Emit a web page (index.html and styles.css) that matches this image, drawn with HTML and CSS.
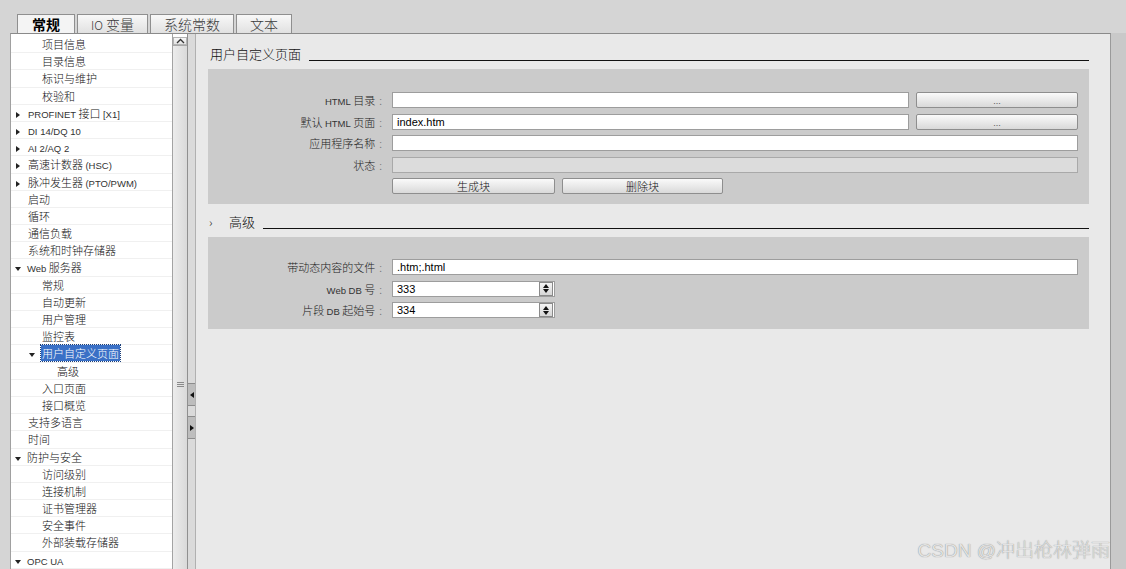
FILE: index.html
```html
<!DOCTYPE html>
<html lang="zh-CN">
<head>
    <meta charset="UTF-8">
    <title>Web 服务器 - 用户自定义页面</title>
    <link rel="stylesheet" href="styles.css">
</head>
<body>
    <!-- Tabs -->
    <div class="tabbar">
        <div class="tab active">常规</div>
        <div class="tab"><span class="tab-lat">IO</span> 变量</div>
        <div class="tab">系统常数</div>
        <div class="tab">文本</div>
    </div>

    <div class="workarea">
        <div class="frame">
            <!-- Navigation tree -->
            <ul class="tree">
                <li class="l1">项目信息</li>
                <li class="l1">目录信息</li>
                <li class="l1">标识与维护</li>
                <li class="l1">校验和</li>
                <li class="l0"><span class="tog closed"></span><span class="lat">PROFINET</span> 接口 <span class="lat">[X1]</span></li>
                <li class="l0"><span class="tog closed"></span><span class="lat">DI 14/DQ 10</span></li>
                <li class="l0"><span class="tog closed"></span><span class="lat">AI 2/AQ 2</span></li>
                <li class="l0"><span class="tog closed"></span>高速计数器 <span class="lat">(HSC)</span></li>
                <li class="l0"><span class="tog closed"></span>脉冲发生器 <span class="lat">(PTO/PWM)</span></li>
                <li class="l0">启动</li>
                <li class="l0">循环</li>
                <li class="l0">通信负载</li>
                <li class="l0">系统和时钟存储器</li>
                <li class="l0"><span class="tog open"></span><span class="lat">Web</span> 服务器</li>
                <li class="l1">常规</li>
                <li class="l1">自动更新</li>
                <li class="l1">用户管理</li>
                <li class="l1">监控表</li>
                <li class="l1"><span class="tog open"></span><span class="sel">用户自定义页面</span></li>
                <li class="l2">高级</li>
                <li class="l1">入口页面</li>
                <li class="l1">接口概览</li>
                <li class="l0">支持多语言</li>
                <li class="l0">时间</li>
                <li class="l0"><span class="tog open"></span>防护与安全</li>
                <li class="l1">访问级别</li>
                <li class="l1">连接机制</li>
                <li class="l1">证书管理器</li>
                <li class="l1">安全事件</li>
                <li class="l1">外部装载存储器</li>
                <li class="l0"><span class="tog open"></span><span class="lat">OPC UA</span></li>
            </ul>

            <!-- Tree scrollbar -->
            <div class="vscroll">
                <div class="sb-up">
                    <svg width="9" height="6" viewBox="0 0 9 6"><polyline points="1,5 4.5,1.5 8,5" fill="none" stroke="#333" stroke-width="1.3"/></svg>
                </div>
                <div class="sb-track"></div>
                <div class="sb-thumb">
                    <svg class="grip" width="7" height="6" viewBox="0 0 7 6"><path d="M0 0.5h7M0 2.5h7M0 4.5h7" stroke="#8a8a8a" stroke-width="1"/></svg>
                </div>
            </div>

            <!-- Splitter -->
            <div class="splitter">
                <span class="sp-btn"><span class="arr-left"></span></span>
                <span class="sp-btn"><span class="arr-right"></span></span>
            </div>

            <!-- Settings -->
            <div class="main">
                <div class="sec-head">
                    <span class="sec-title">用户自定义页面</span>
                    <span class="rule"></span>
                </div>
                <div class="panel panel-pages">
                    <div class="row">
                        <label class="lbl"><span class="lat">HTML</span> 目录<span class="colon">:</span></label>
                        <input class="field w-mid" type="text" value="">
                        <button class="btn browse">...</button>
                    </div>
                    <div class="row">
                        <label class="lbl">默认 <span class="lat">HTML</span> 页面<span class="colon">:</span></label>
                        <input class="field w-mid" type="text" value="index.htm">
                        <button class="btn browse">...</button>
                    </div>
                    <div class="row">
                        <label class="lbl">应用程序名称<span class="colon">:</span></label>
                        <input class="field w-full" type="text" value="">
                    </div>
                    <div class="row">
                        <label class="lbl">状态<span class="colon">:</span></label>
                        <input class="field w-full" type="text" value="" disabled>
                    </div>
                    <div class="row actions">
                        <button class="btn act">生成块</button>
                        <button class="btn act">删除块</button>
                    </div>
                </div>

                <div class="sec-head adv">
                    <span class="chev">›</span>
                    <span class="sec-title">高级</span>
                    <span class="rule"></span>
                </div>
                <div class="panel panel-adv">
                    <div class="row">
                        <label class="lbl">带动态内容的文件<span class="colon">:</span></label>
                        <input class="field w-full" type="text" value=".htm;.html">
                    </div>
                    <div class="row">
                        <label class="lbl"><span class="lat">Web DB</span> 号<span class="colon">:</span></label>
                        <div class="spin">
                            <input type="text" value="333">
                            <span class="spin-btn"><span class="up"></span><span class="down"></span></span>
                        </div>
                    </div>
                    <div class="row">
                        <label class="lbl">片段 <span class="lat">DB</span> 起始号<span class="colon">:</span></label>
                        <div class="spin">
                            <input type="text" value="334">
                            <span class="spin-btn"><span class="up"></span><span class="down"></span></span>
                        </div>
                    </div>
                </div>
            </div>
        </div>
        <div class="strip"></div>
    </div>

    <div class="watermark">CSDN @冲出枪林弹雨</div>
</body>
</html>
```

FILE: styles.css
```css
/* General */
body {
    margin: 0;
    width: 1126px;
    height: 569px;
    overflow: hidden;
    position: relative;
    background-color: #d5d5d5;
    font-family: "Noto Sans CJK SC", sans-serif;
    font-weight: 300;
    font-size: 11px;
    color: #1a1a1a;
}
.lat {
    font-family: "Liberation Sans", sans-serif;
    font-weight: normal;
    font-size: 9.5px;
    color: #333;
}

/* Tabs */
.tabbar {
    display: flex;
    align-items: flex-end;
    gap: 2px;
    height: 33px;
    padding-left: 17px;
    box-sizing: border-box;
}
.tab {
    height: 19px;
    line-height: 19px;
    padding: 0 13px;
    border: 1px solid #8f8f8f;
    border-bottom: none;
    box-sizing: border-box;
    background: linear-gradient(#f8f8f8, #e1e1e1);
    font-size: 14px;
    color: #3a3a3a;
}
.tab.active {
    padding: 0 14px;
    background: #f4f4f4;
    color: #000;
    font-weight: bold;
}
.tab-lat {
    font-size: 12px;
}

/* Frame */
.workarea {
    display: flex;
    height: 536px;
}
.frame {
    flex: 1;
    display: flex;
    margin-left: 10px;
    border-top: 1px solid #8a8a8a;
    border-left: 1px solid #a0a0a0;
    border-right: 1px solid #9a9a9a;
    overflow: hidden;
}
.strip {
    width: 15px;
    background-color: #c9c9c9;
}

/* Tree */
.tree {
    width: 161px;
    flex: none;
    margin: 0;
    padding: 2px 0 0;
    list-style: none;
    background-color: #fff;
}
.tree li {
    height: 17.2px;
    line-height: 17px;
    border-bottom: 1px solid #f0f0f0;
    box-sizing: border-box;
    white-space: nowrap;
    color: #111;
}
.tree .l0 { padding-left: 17px; }
.tree .l1 { padding-left: 31px; }
.tree .l2 { padding-left: 46px; }
.tog {
    display: inline-block;
    width: 0;
    height: 0;
    vertical-align: middle;
}
.tog.closed {
    border-left: 4px solid #222;
    border-top: 3.5px solid transparent;
    border-bottom: 3.5px solid transparent;
    margin-left: -12px;
    margin-right: 8px;
}
.tog.open {
    border-top: 4px solid #222;
    border-left: 3.5px solid transparent;
    border-right: 3.5px solid transparent;
    margin-left: -13px;
    margin-right: 6px;
}
.sel {
    background-color: #3a70c6;
    color: #fff;
    outline: 1px dotted #1b3f7a;
    padding: 0 1px;
}

/* Scrollbar */
.vscroll {
    width: 14px;
    flex: none;
    padding-top: 3px;
    border-left: 1px solid #a3a3a3;
    border-right: 1px solid #8f8f8f;
    background-color: #fff;
    display: flex;
    flex-direction: column;
}
.sb-up {
    height: 16px;
    display: flex;
    align-items: center;
    justify-content: center;
    background: linear-gradient(#f7f7f7, #e3e3e3);
    border: 1px solid #b4b4b4;
    box-sizing: border-box;
}
.sb-track {
    height: 15px;
    background-color: #c6c6c6;
}
.sb-thumb {
    flex: none;
    height: 664px;
    padding-top: 329px;
    box-sizing: border-box;
    text-align: center;
    background: linear-gradient(to right, #ececec, #d9d9d9);
    border-top: 1px solid #a8a8a8;
}

/* Splitter */
.splitter {
    width: 7px;
    flex: none;
    padding-top: 349px;
    background-color: #dadada;
    border-right: 1px solid #b0b0b0;
    display: flex;
    flex-direction: column;
    align-items: center;
    gap: 10px;
}
.sp-btn {
    width: 7px;
    height: 21px;
    background-color: #bdbdbd;
    border-top: 1px solid #8c8c8c;
    border-bottom: 1px solid #8c8c8c;
    display: flex;
    align-items: center;
    justify-content: center;
}
.arr-left, .arr-right {
    width: 0;
    height: 0;
    border-top: 3.5px solid transparent;
    border-bottom: 3.5px solid transparent;
}
.arr-left { border-right: 4px solid #111; }
.arr-right { border-left: 4px solid #111; }

/* Main settings area */
.main {
    flex: 1;
    padding: 0 21px 0 12px;
    background-color: #e9e9e9;
}
.sec-head {
    display: flex;
    height: 16px;
    margin-top: 12px;
    padding-left: 2px;
}
.sec-head.adv {
    margin-top: 10px;
    padding-left: 1px;
}
.sec-title {
    font-size: 13px;
    line-height: 16px;
    color: #111;
}
.chev {
    width: 20px;
    font-size: 12px;
    line-height: 16px;
}
.rule {
    flex: 1;
    height: 14px;
    margin-left: 8px;
    border-bottom: 1px solid #111;
}
.panel {
    margin-top: 7px;
    padding: 23px 11px 10px 0;
    background-color: #cbcbcb;
}
.panel-adv {
    padding-top: 22px;
    padding-bottom: 11px;
}
.row {
    display: flex;
    align-items: center;
    height: 16px;
    margin-bottom: 5.5px;
}
.row:last-child {
    margin-bottom: 0;
}
.lbl {
    width: 184px;
    flex: none;
    padding-right: 10px;
    box-sizing: border-box;
    text-align: right;
    color: #222;
}
.colon {
    margin-left: 4px;
    color: #777;
}
.field {
    height: 16px;
    padding: 0 4px;
    border: 1px solid #9d9d9d;
    box-sizing: border-box;
    background-color: #fff;
    font: 11px "Liberation Sans", sans-serif;
    color: #000;
    outline: none;
}
.field:disabled {
    background-color: #dcdcdc;
    border-color: #a9a9a9;
}
.w-mid { width: 517px; }
.w-full { flex: 1; }
.btn {
    height: 16px;
    padding: 0;
    border: 1px solid #8e8e8e;
    border-radius: 2px;
    background: linear-gradient(#fafafa, #d9d9d9);
    font-family: "Noto Sans CJK SC", sans-serif;
    font-weight: 300;
    font-size: 11px;
    line-height: 14px;
    color: #111;
}
.browse {
    width: 162px;
    margin-left: 7px;
    font-family: "Liberation Sans", sans-serif;
    font-weight: normal;
    font-size: 9px;
    line-height: 16px;
    color: #555;
}
.actions {
    padding-left: 184px;
    gap: 7px;
}
.act { width: 163px; }
.act + .act { width: 161px; }

/* Spin field */
.spin {
    width: 163px;
    height: 16px;
    display: flex;
    align-items: center;
    border: 1px solid #9d9d9d;
    box-sizing: border-box;
    background-color: #fff;
}
.spin input {
    flex: 1;
    min-width: 0;
    height: 14px;
    padding: 0 4px;
    border: none;
    font: 11px "Liberation Sans", sans-serif;
    outline: none;
}
.spin-btn {
    width: 12px;
    height: 12px;
    margin-right: 1px;
    border: 1px solid #8a8a8a;
    background: linear-gradient(#f4f4f4, #d6d6d6);
    display: flex;
    flex-direction: column;
    align-items: center;
    justify-content: center;
    gap: 1px;
}
.spin-btn .up, .spin-btn .down {
    width: 0;
    height: 0;
    border-left: 3.5px solid transparent;
    border-right: 3.5px solid transparent;
}
.spin-btn .up { border-bottom: 4px solid #111; }
.spin-btn .down { border-top: 4px solid #111; }

/* Watermark */
.watermark {
    position: absolute;
    right: 16px;
    bottom: 8px;
    font-family: "Liberation Sans", "Noto Sans CJK SC", sans-serif;
    font-weight: 300;
    font-size: 19px;
    line-height: 20px;
    color: #e2e2e2;
    text-shadow: 0 0 1px #777;
}
```
